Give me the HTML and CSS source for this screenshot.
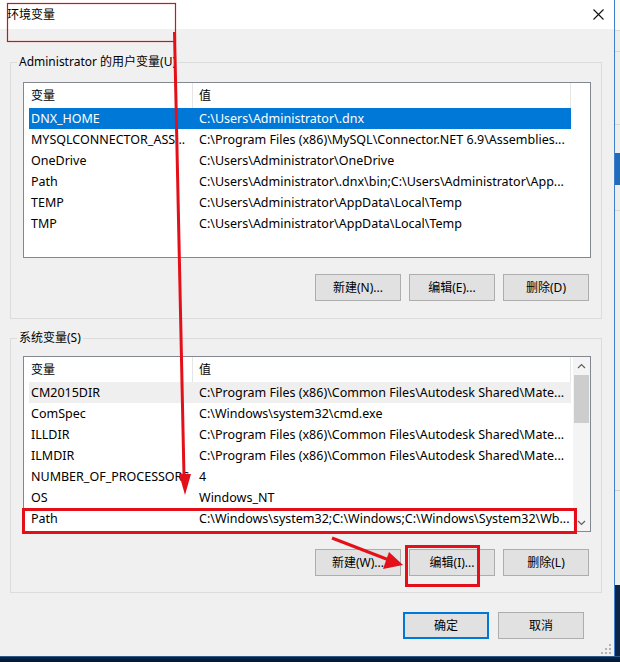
FILE: index.html
```html
<!DOCTYPE html>
<html lang="zh-CN">
<head>
<meta charset="utf-8">
<title>环境变量</title>
<link rel="stylesheet" href="styles.css">
</head>
<body>
<div class="screen">
  <div class="top">
    <div class="dialog">
      <div class="titlebar">
        <span class="title">环境变量</span>
        <svg class="close" width="11" height="11" viewBox="0 0 11 11"><path d="M0.5 0.5L10.5 10.5M10.5 0.5L0.5 10.5" stroke="#111" stroke-width="1.1" fill="none"/></svg>
      </div>
      <div class="content">
        <fieldset class="group g1">
          <legend>Administrator 的用户变量(U)</legend>
          <div class="group-body">
            <div class="list">
              <div class="list-main">
                <div class="header">
                  <div class="h-cell h1">变量</div>
                  <div class="h-cell h2">值</div>
                  <div class="h-fill"></div>
                </div>
                <div class="row selected"><span class="c1">DNX_HOME</span><span class="c2">C:\Users\Administrator\.dnx</span></div>
                <div class="row"><span class="c1">MYSQLCONNECTOR_ASS...</span><span class="c2">C:\Program Files (x86)\MySQL\Connector.NET 6.9\Assemblies...</span></div>
                <div class="row"><span class="c1">OneDrive</span><span class="c2">C:\Users\Administrator\OneDrive</span></div>
                <div class="row"><span class="c1">Path</span><span class="c2">C:\Users\Administrator\.dnx\bin;C:\Users\Administrator\App...</span></div>
                <div class="row"><span class="c1">TEMP</span><span class="c2">C:\Users\Administrator\AppData\Local\Temp</span></div>
                <div class="row"><span class="c1">TMP</span><span class="c2">C:\Users\Administrator\AppData\Local\Temp</span></div>
              </div>
            </div>
            <div class="btn-row">
              <button class="btn">新建(N)...</button>
              <button class="btn">编辑(E)...</button>
              <button class="btn">删除(D)</button>
            </div>
          </div>
        </fieldset>

        <fieldset class="group g2">
          <legend>系统变量(S)</legend>
          <div class="group-body">
            <div class="list">
              <div class="list-main">
                <div class="header">
                  <div class="h-cell h1">变量</div>
                  <div class="h-cell h2 h2-short">值</div>
                </div>
                <div class="row hover"><span class="c1">CM2015DIR</span><span class="c2">C:\Program Files (x86)\Common Files\Autodesk Shared\Mate...</span></div>
                <div class="row"><span class="c1">ComSpec</span><span class="c2">C:\Windows\system32\cmd.exe</span></div>
                <div class="row"><span class="c1">ILLDIR</span><span class="c2">C:\Program Files (x86)\Common Files\Autodesk Shared\Mate...</span></div>
                <div class="row"><span class="c1">ILMDIR</span><span class="c2">C:\Program Files (x86)\Common Files\Autodesk Shared\Mate...</span></div>
                <div class="row"><span class="c1">NUMBER_OF_PROCESSORS</span><span class="c2">4</span></div>
                <div class="row"><span class="c1">OS</span><span class="c2">Windows_NT</span></div>
                <div class="row"><span class="c1">Path</span><span class="c2">C:\Windows\system32;C:\Windows;C:\Windows\System32\Wb...</span></div>
              </div>
              <div class="scrollbar">
                <div class="sb-btn"><svg width="9" height="6" viewBox="0 0 9 6"><path d="M1 5L4.5 1.5L8 5" stroke="#606060" stroke-width="1.2" fill="none"/></svg></div>
                <div class="sb-track"><div class="sb-thumb"></div></div>
                <div class="sb-btn"><svg width="9" height="6" viewBox="0 0 9 6"><path d="M1 1L4.5 4.5L8 1" stroke="#606060" stroke-width="1.2" fill="none"/></svg></div>
              </div>
            </div>
            <div class="btn-row">
              <button class="btn">新建(W)...</button>
              <button class="btn">编辑(I)...</button>
              <button class="btn">删除(L)</button>
            </div>
          </div>
        </fieldset>

        <div class="footer">
          <button class="btn btn-default">确定</button>
          <button class="btn">取消</button>
        </div>
      </div>
      <svg class="grip" width="11" height="10" viewBox="0 0 11 10">
        <rect x="8" y="0" width="2" height="2" fill="#b4b4b4"/>
        <rect x="4" y="4" width="2" height="2" fill="#b4b4b4"/>
        <rect x="8" y="4" width="2" height="2" fill="#b4b4b4"/>
        <rect x="0" y="8" width="2" height="2" fill="#b4b4b4"/>
        <rect x="4" y="8" width="2" height="2" fill="#b4b4b4"/>
        <rect x="8" y="8" width="2" height="2" fill="#b4b4b4"/>
      </svg>
    </div>
    <div class="desk"></div>
  </div>
  <div class="taskbar"></div>
</div>

<svg class="annot" width="620" height="662" viewBox="0 0 620 662">
  <rect x="7.5" y="3.5" width="168" height="38" fill="none" stroke="#d3101c" stroke-width="1.2"/>
  <line x1="174.5" y1="32" x2="184" y2="476" stroke="#e3101a" stroke-width="3"/>
  <polygon points="185,495 179,474 191,474" fill="#e3101a"/>
  <rect x="23.5" y="509.5" width="552" height="23" fill="none" stroke="#e3101a" stroke-width="3"/>
  <line x1="332" y1="538" x2="389" y2="560" stroke="#e3101a" stroke-width="3"/>
  <polygon points="403,565 383,569 389,552" fill="#e3101a"/>
  <rect x="406.5" y="546.5" width="72" height="39" fill="none" stroke="#e3101a" stroke-width="3"/>
</svg>
</body>
</html>
```

FILE: styles.css
```css
* {
  box-sizing: border-box;
}

html,
body {
  margin: 0;
  padding: 0;
}

body {
  width: 620px;
  height: 662px;
  overflow: hidden;
  position: relative;
  font-family: "Noto Sans", "Noto Sans CJK SC", sans-serif;
  font-size: 12px;
  color: #000;
  background: #0b2748;
}

.screen {
  width: 620px;
  height: 662px;
  display: flex;
  flex-direction: column;
}

.top {
  display: flex;
  height: 656px;
}

.dialog {
  position: relative;
  width: 615px;
  height: 656px;
  background: #f0f0f0;
  border-right: 1px solid #3d80c6;
  display: flex;
  flex-direction: column;
}

.desk {
  flex: 1;
  background: linear-gradient(to bottom,
    #fbfbfb 0 30px, #d8d8d8 30px 31px,
    #eeeeee 31px 51px, #d6d6d6 51px 52px,
    #eeeeee 52px 124px, #d6d6d6 124px 125px,
    #eeeeee 125px 153px, #1f6cbd 153px 185px,
    #eeeeee 185px 210px, #d6d6d6 210px 211px,
    #eeeeee 211px 490px, #cfcfcf 490px 491px,
    #eeeeee 491px 585px, #0b2748 585px);
}

.taskbar {
  height: 6px;
  background: linear-gradient(to bottom, #2a5a88 0 1px, #0a2546 1px, #041630);
}

.titlebar {
  height: 29px;
  flex: none;
  background: #fff;
  display: flex;
  align-items: center;
  justify-content: space-between;
  padding: 0 10px 0 7px;
}

.title {
  font-size: 12px;
  line-height: 16px;
}

.close {
  display: block;
}

.content {
  padding: 25px 0 0 10px;
}

.group {
  margin: 0;
  padding: 0;
  width: 592px;
  min-width: 0;
  border: 1px solid #dcdcdc;
}

.group legend {
  margin-left: 6px;
  padding: 0 2px;
  font-size: 12px;
  line-height: 16px;
  color: #000;
}

.g2 {
  margin-top: 11px;
}

.g1 .group-body {
  padding: 12px 10px 17px 12px;
}

.g2 .group-body {
  padding: 10px 10px 16px 12px;
}

.list {
  width: 568px;
  height: 176px;
  border: 1px solid #828790;
  background: #fff;
  display: flex;
  overflow: hidden;
}

.list-main {
  flex: 1;
  min-width: 0;
}

.header {
  display: flex;
  height: 25px;
}

.h-cell {
  display: flex;
  align-items: center;
  border-right: 1px solid #e5e5e5;
  line-height: 16px;
}

.h1 {
  width: 169px;
  padding-left: 7px;
}

.h2 {
  width: 378px;
  padding-left: 6px;
}

.h2-short {
  width: 378px;
}

.h-fill {
  flex: 1;
}

.row {
  display: flex;
  margin-left: 5px;
  width: 542px;
  height: 21px;
  line-height: 21px;
  font-size: 12.5px;
  white-space: nowrap;
}

.row.selected {
  background: #0078d7;
  color: #fff;
}

.row.hover {
  background: #efefef;
}

.c1 {
  width: 164px;
  padding-left: 2px;
  overflow: hidden;
  flex: none;
}

.c2 {
  flex: 1;
  min-width: 0;
  padding-left: 6px;
  overflow: hidden;
}

.scrollbar {
  width: 17px;
  flex: none;
  background: #f4f4f4;
  display: flex;
  flex-direction: column;
}

.sb-btn {
  height: 17px;
  display: flex;
  align-items: center;
  justify-content: center;
}

.sb-btn svg {
  display: block;
}

.sb-track {
  flex: 1;
  padding: 1px 1px 0;
}

.sb-thumb {
  height: 48px;
  background: #cdcdcd;
}

.btn-row {
  display: flex;
  justify-content: flex-end;
  gap: 8px;
  margin-top: 16px;
  padding-right: 2px;
}

.g2 .btn-row {
  margin-top: 17px;
}

.btn {
  width: 86px;
  height: 27px;
  margin: 0;
  padding: 0;
  background: #e1e1e1;
  border: 1px solid #adadad;
  font-family: "Noto Sans", "Noto Sans CJK SC", sans-serif;
  font-size: 12px;
  line-height: 16px;
  color: #000;
  text-align: center;
}

.btn-default {
  border: 2px solid #0078d7;
}

.footer {
  display: flex;
  justify-content: flex-end;
  gap: 9px;
  margin-top: 19px;
  padding-right: 30px;
}

.grip {
  position: absolute;
  right: 2px;
  bottom: 2px;
}

.annot {
  position: absolute;
  top: 0;
  left: 0;
  pointer-events: none;
}
```
